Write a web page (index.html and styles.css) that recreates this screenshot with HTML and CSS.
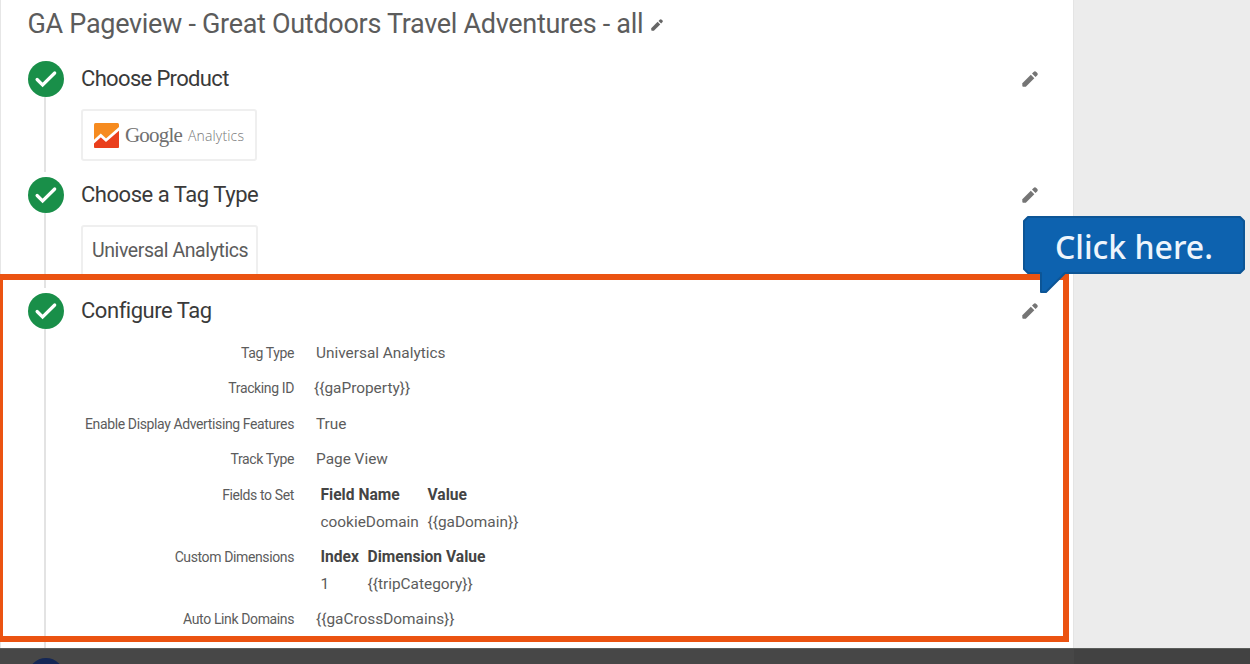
FILE: index.html
```html
<!DOCTYPE html>
<html lang="en">
<head>
<meta charset="utf-8">
<title>GA Pageview - Great Outdoors Travel Adventures - all</title>
<link rel="stylesheet" href="styles.css">
</head>
<body>
<svg class="defs" width="0" height="0" aria-hidden="true">
  <symbol id="pencil" viewBox="0 0 16 16"><path d="M.3 12.200 8.800 3.700 12.300 7.200 3.800 15.700H1.300a1 1 0 0 1-1-1z"/><path d="m10 2.500 1.600-1.600a1.900 1.900 0 0 1 2.700 0l.8.8a1.900 1.900 0 0 1 0 2.700L13.500 6z"/></symbol>
  <symbol id="check" viewBox="0 0 36 36"><circle cx="18" cy="18" r="18" fill="#198f49"/><path d="m9.100 18.500 5.500 5.500L26.700 12" fill="none" stroke="#fff" stroke-width="3.200" stroke-linecap="round"/></symbol>
</svg>
<div class="page">
  <main class="panel">
    <h1 class="title"><span class="title-text">GA Pageview - Great Outdoors Travel Adventures - all</span><svg class="pencil-small"><use href="#pencil"/></svg></h1>
    <section class="step">
      <div class="rail"><svg class="check"><use href="#check"/></svg><div class="line"></div></div>
      <div class="body">
        <header class="head"><h2 class="heading h-product">Choose Product</h2><svg class="pencil"><use href="#pencil"/></svg></header>
        <div class="card card-product">
          <svg class="ga-logo" viewBox="0 0 25 25"><rect width="25" height="25" rx="1.5" fill="#f68b1f"/><path d="M0 18 7.500 12.500l5 5L25 5v18.500a1.500 1.500 0 0 1-1.500 1.500h-22A1.500 1.500 0 0 1 0 23.500z" fill="#ea3f1c"/><path d="M-1 19.500 6.800 12.500l5.200 4.700L26 5" fill="none" stroke="#fff" stroke-width="2.800"/></svg>
          <span class="google">Google</span><span class="analytics">Analytics</span>
        </div>
      </div>
    </section>
    <section class="step">
      <div class="rail"><svg class="check"><use href="#check"/></svg><div class="line"></div></div>
      <div class="body">
        <header class="head"><h2 class="heading h-type">Choose a Tag Type</h2><svg class="pencil"><use href="#pencil"/></svg></header>
        <div class="card card-type"><span class="type-name">Universal Analytics</span></div>
      </div>
    </section>
    <section class="step step-last">
      <div class="rail"><svg class="check"><use href="#check"/></svg><div class="line"></div></div>
      <div class="body">
        <header class="head"><h2 class="heading h-config">Configure Tag</h2><svg class="pencil"><use href="#pencil"/></svg></header>
        <dl class="details">
          <dt>Tag Type</dt><dd>Universal Analytics</dd>
          <dt>Tracking ID</dt><dd class="prop">{{gaProperty}}</dd>
          <dt>Enable Display Advertising Features</dt><dd>True</dd>
          <dt>Track Type</dt><dd>Page View</dd>
          <dt>Fields to Set</dt>
          <dd class="pairs fields"><b>Field Name</b><b>Value</b><span>cookieDomain</span><span>{{gaDomain}}</span></dd>
          <dt>Custom Dimensions</dt>
          <dd class="pairs dims"><b>Index</b><b>Dimension Value</b><span>1</span><span>{{tripCategory}}</span></dd>
          <dt>Auto Link Domains</dt><dd>{{gaCrossDomains}}</dd>
        </dl>
      </div>
    </section>
  </main>
  <div class="highlight"></div>
  <div class="callout"><svg class="bubble" viewBox="0 0 222 78"><path d="M5 1h212l4 4v48l-4 4H42L23 76h-5V57H5l-4-4V5z" fill="#0d62af" stroke="#0c5596" stroke-width="2" stroke-linejoin="round"/></svg><span class="callout-text">Click here.</span></div>
  <div class="shade"><svg class="next-dot" viewBox="0 0 36 36"><circle cx="18" cy="18" r="18"/></svg></div>
</div>
</body>
</html>
```
FILE: styles.css
```css
* { box-sizing: border-box; margin: 0; }
body { font-family: Roboto, "Liberation Sans", sans-serif; color: #5c5c5c; background: #ececec; }
svg { display: block; flex: none; }
.defs { position: absolute; }
.page { position: relative; width: 1250px; height: 664px; overflow: hidden; }
.panel { width: 1074px; height: 664px; padding: 0 35px 0 26.5px; background: #fff; border-left: 1px solid #e6e6e6; border-right: 1px solid #e4e4e4; }
.title { display: flex; align-items: center; height: 61px; padding-bottom: 13px; font-size: 27px; font-weight: 400; letter-spacing: -.3px; white-space: nowrap; gap: 8px; }
.title-text { width: 615px; }
.pencil-small { width: 12px; height: 12px; margin-top: 2px; fill: #666; }
.step { display: flex; gap: 17.5px; height: 116px; }
.rail { display: flex; flex-direction: column; align-items: center; width: 36px; }
.check { width: 36px; height: 36px; }
.line { width: 2px; height: 75px; margin-right: 1px; background: #e3e3e3; }
.step-last .line { height: 325px; flex: none; }
.body { flex: 1; }
.head { display: flex; align-items: center; justify-content: space-between; height: 36px; }
.heading { font-size: 22px; font-weight: 400; line-height: 26px; margin-top: -1px; letter-spacing: -.46px; color: #3a3a3a; }
.h-product { letter-spacing: -.66px; }
.pencil { width: 16px; height: 16px; fill: #757575; }
.card { display: flex; align-items: center; height: 52px; margin-top: 12px; border: 2px solid #efefef; border-radius: 3px; background: #fff; }
.card-product { width: 176px; padding-left: 11px; }
.card-type { width: 177px; padding-left: 9px; }
.type-name { font-size: 19.5px; margin-top: -1px; letter-spacing: -.42px; white-space: nowrap; }
.ga-logo { width: 25px; height: 25px; }
.google { width: 69px; padding-left: 6px; font-family: "Liberation Serif", serif; font-size: 21px; letter-spacing: -.8px; color: #707070; }
.analytics { font-family: "Open Sans", sans-serif; font-size: 14px; letter-spacing: .15px; color: #777; font-weight: 300; }
.details { display: grid; grid-template-columns: 213px 1fr; column-gap: 22px; grid-template-rows: 35.4px 35.4px 35.4px 35.4px 62px 62px 35.4px; padding-top: 6px; }
.details dt { display: flex; justify-content: flex-end; font-size: 14px; letter-spacing: -.38px; line-height: 37.4px; white-space: nowrap; }
.details dd { font-size: 15.4px; line-height: 37.4px; white-space: nowrap; }
.details .prop { margin-left: -2px; }
.pairs { display: grid; grid-template-rows: 26.5px 26.5px; padding: 5.5px 0 0 4.5px; }
.details .pairs { line-height: 26.5px; }
.fields { grid-template-columns: 107px 1fr; }
.dims { grid-template-columns: 47px 1fr; }
.pairs b { font-size: 15.6px; font-weight: 700; color: #444; }
.highlight { position: absolute; left: -3px; top: 274px; width: 1072px; height: 368px; border: 6px solid #eb5311; }
.callout { position: absolute; left: 1023px; top: 216px; width: 222px; height: 78px; }
.bubble { width: 222px; height: 78px; }
.callout-text { position: absolute; left: 32px; top: 8px; font: 500 32px/46px "Noto Sans", sans-serif; color: #eef5fc; white-space: nowrap; }
.shade { position: absolute; left: 0; top: 648px; width: 1250px; height: 16px; overflow: hidden; padding: 9px 0 0 27.5px; background: linear-gradient(90deg, #474747 1074px, #424242 1074px); border-top: 1px solid #5b5d5b; }
.next-dot { width: 36px; height: 36px; fill: #142756; }
```
